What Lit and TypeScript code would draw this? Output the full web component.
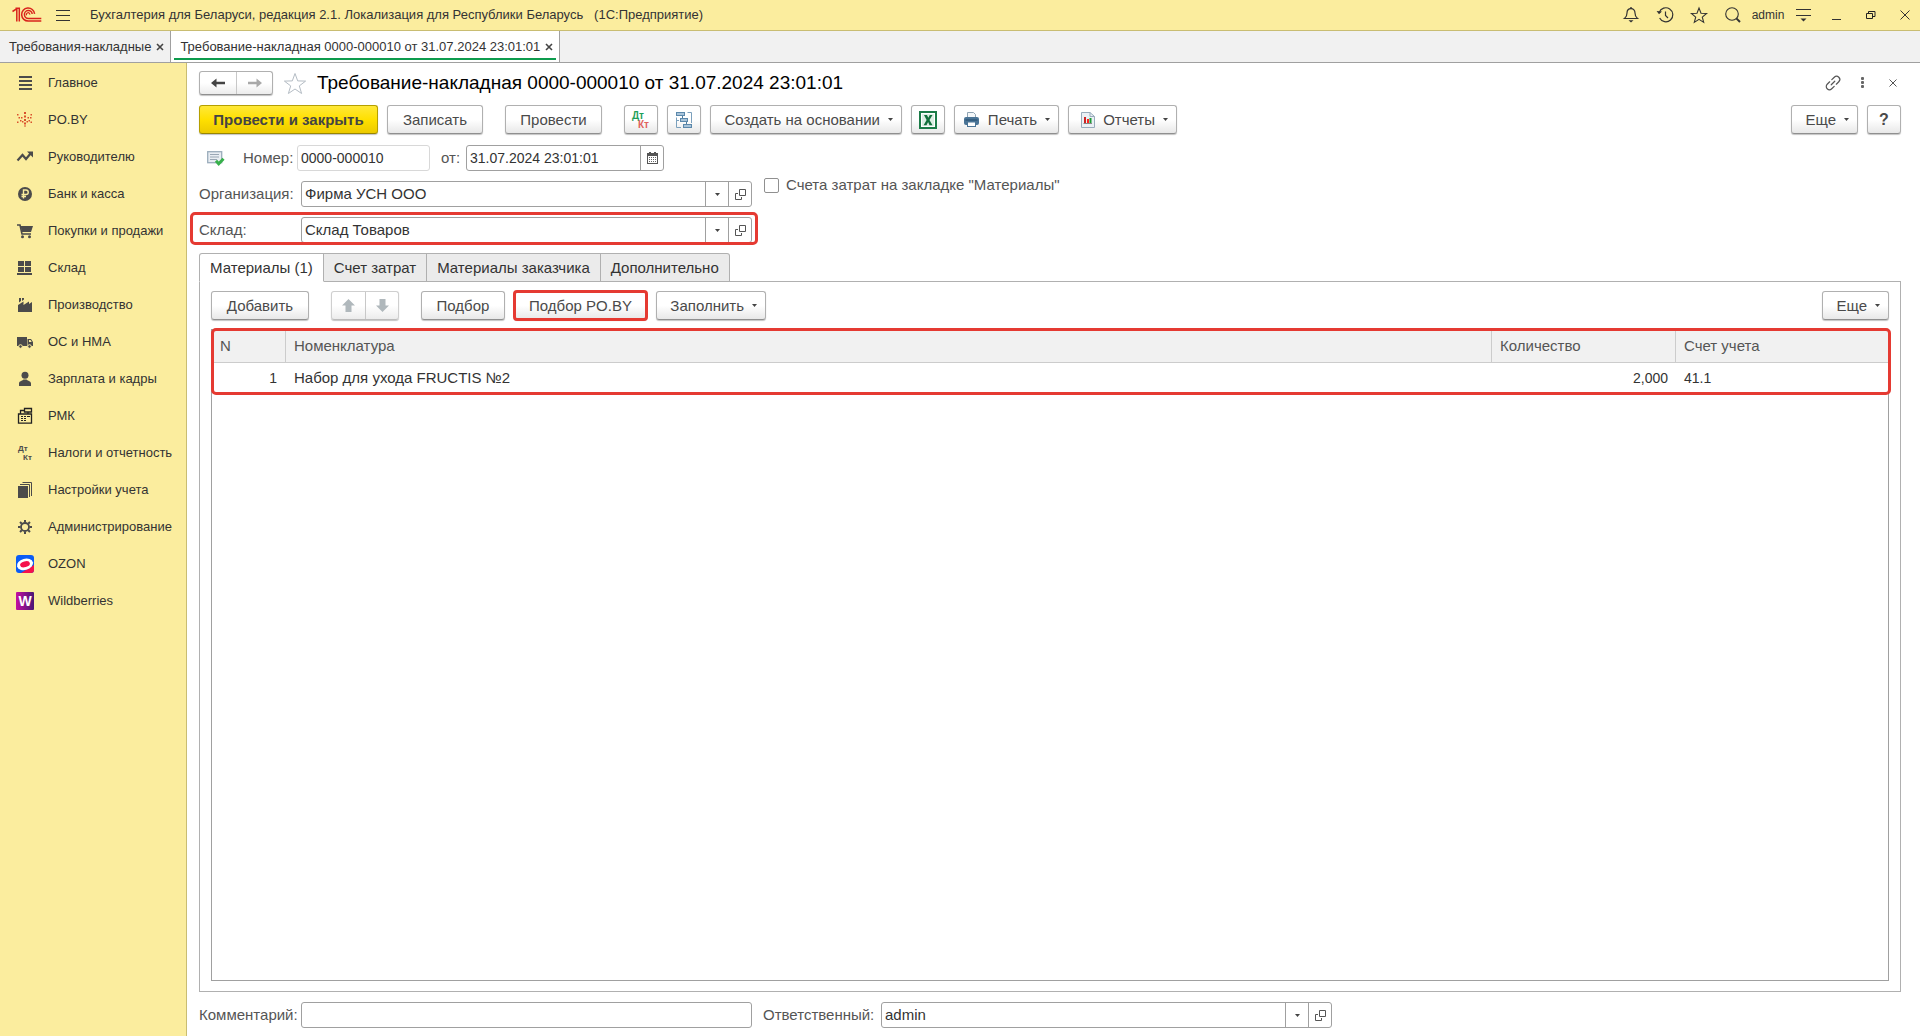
import { LitElement, html, css, svg, nothing } from "lit";
import { customElement, property } from "lit/decorators.js";

const icon = (w: number, h: number, body: unknown) =>
  html`<svg width=${w} height=${h} viewBox="0 0 ${w} ${h}" aria-hidden="true">${body}</svg>`;

const DARK = "#4b4b4b";

const icons = {
  logo: icon(30, 16, svg`<g fill="none" stroke="#d9231c" stroke-width="1.5">
    <path d="M.5 4.500L3.500 2.600H4.800V14.500"/><path d="M3.500 1.200H7.300V14.500"/>
    <path d="M22.600 6.800A6.500 6.500 0 1 0 16.400 14H29.300"/><path d="M20.200 7A3.900 3.900 0 1 0 16.400 11.400H29.300"/></g>
    <path d="M14.600 8.200a1.700 1.700 0 1 1 3.200-.6" fill="none" stroke="#d9231c" stroke-width="1.200"/>`),
  burger: icon(14, 12, svg`<path d="M0 1.500h14M0 6.500h14M0 11.500h14" stroke="#333" stroke-width="1"/>`),
  bell: icon(16, 16, svg`<path d="M1.500 11.500h13c-2-1.500-2.500-3-2.500-5.500C12 3.300 10.500 1.700 8 1.700S4 3.300 4 6c0 2.500-.5 4-2.500 5.500z" fill="none" stroke="#333" stroke-width="1.200"/><path d="M8 0v2" stroke="#333" stroke-width="1.400"/><path d="M5.500 13.200h5L8 15.600z" fill="#333"/>`),
  history: icon(18, 16, svg`<path d="M3.200 5.500A7 7 0 1 1 3.600 11" fill="none" stroke="#333" stroke-width="1.200"/><path d="M.6 4l2.400 3.200L6 4.400z" fill="#333"/><path d="M9.500 4.500V8.500l2.500 2.500" fill="none" stroke="#333" stroke-width="1.200"/>`),
  star: icon(18, 16, svg`<path d="M9 1l2 5.200 5.600.3-4.300 3.600 1.400 5.300L9 12.400l-4.700 3 1.400-5.300L1.400 6.500 7 6.200z" fill="none" stroke="#333" stroke-width="1.100"/>`),
  search: icon(16, 16, svg`<circle cx="7" cy="7" r="6.300" fill="none" stroke="#333" stroke-width="1.100"/><path d="M11.400 11.400l3.600 3.600" stroke="#333" stroke-width="2"/>`),
  settings: icon(15, 14, svg`<path d="M0 1.500h15M0 7.500h15" stroke="#333" stroke-width="1"/><path d="M4.500 10.500h6l-3 3z" fill="#333"/>`),
  minimize: icon(10, 10, svg`<path d="M0 9.500h9" stroke="#333" stroke-width="1"/>`),
  restore: icon(10, 10, svg`<path d="M.5 3.500h6v5h-6zM2.500 3V1.500h6.500v5H7" fill="none" stroke="#222" stroke-width="1"/>`),
  close: icon(10, 10, svg`<path d="M.5.5l9 9M9.500.5l-9 9" stroke="#333" stroke-width="1"/>`),
  tabClose: icon(8, 8, svg`<path d="M1 1l6 6M7 1l-6 6" stroke="#444" stroke-width="1.600"/>`),
  back: icon(14, 10, svg`<path d="M0 5l5.500-4.500v3.300H14v2.400H5.500v3.300z" fill="#444"/>`),
  forward: icon(14, 10, svg`<path d="M14 5L8.500.5v3.300H0v2.400h8.500v3.300z" fill="#a9a9a9"/>`),
  favorite: icon(24, 23, svg`<path d="M12 1.500l2.700 7.400 7.900.2-6.300 4.800 2.300 7.600-6.600-4.500-6.600 4.500 2.300-7.600L1.400 9.100l7.900-.2z" fill="#fff" stroke="#b4bcc4" stroke-width="1"/>`),
  link: icon(16, 16, svg`<g fill="none" stroke="#555" stroke-width="1.200" stroke-linecap="round" transform="rotate(-45 8 8)"><path d="M6.500 4.800H3a3.200 3.200 0 0 0 0 6.400h3.500M9.500 4.800H13a3.200 3.200 0 0 1 0 6.400H9.500M5.500 8h5" stroke-dasharray="none"/></g>`),
  dots: icon(4, 12, svg`<g fill="#666"><rect x="0" y="0" width="3" height="3" rx="1"/><rect x="0" y="4" width="3" height="3" rx="1"/><rect x="0" y="8" width="3" height="3" rx="1"/></g>`),
  closeSmall: icon(8, 8, svg`<path d="M.5.5l7 7M7.500.5l-7 7" stroke="#555" stroke-width="1"/>`),
  structure: icon(18, 18, svg`<path d="M1.500 6.500V16.500H6M1.500 9.500H4M12.500 1.500H16.500V12M13 8.500h-1" fill="none" stroke="#7ba0bd" stroke-width="1"/><path d="M7.500 5v2.500M11.500 10.500V13" stroke="#4f7c9f"/><g fill="#a9c4da" stroke="#5b88ab" stroke-width="1"><rect x="1.500" y="1.500" width="8" height="3"/><rect x="5.500" y="7.500" width="7" height="3"/><rect x="8.500" y="13.500" width="8" height="3"/></g>`),
  excel: icon(18, 18, svg`<rect x="1" y="1" width="16" height="16" fill="#fff" stroke="#1c7c48" stroke-width="2"/><rect x="3" y="3" width="12" height="12" fill="#dceee3"/><path d="M5 4h3l1.300 2.800L10.800 4h2.700l-3 5 3 5.200h-3L9.100 11l-1.600 3.200H4.600l3-5.200z" fill="#12703c"/>`),
  printer: icon(17, 17, svg`<path d="M4.500 1.500h6l2 2V7h-8z" fill="#f4f7f9" stroke="#8fa3b3" stroke-width="1"/><rect x="1" y="6" width="15" height="8" rx="2" fill="#4a7496"/><path d="M2.500 9h12" stroke="#31587a" stroke-width="1.500"/><rect x="4.500" y="11" width="8" height="4.500" fill="#fff" stroke="#4a7496"/>`),
  report: icon(14, 16, svg`<path d="M.5.500h8.500l4.500 4v11H.5z" fill="#eaf0f5" stroke="#98abbb" stroke-width="1"/><path d="M9 .5v4h4.500" fill="none" stroke="#98abbb"/><path d="M3 5h2v6H3z" fill="#c22"/><path d="M6 7h2v4H6z" fill="#f22"/><path d="M8.500 6h2v5h-2z" fill="#1d9a34"/><path d="M2.500 11.500h8.500" stroke="#888"/>`),
  posted: icon(18, 15, svg`<rect x=".7" y=".7" width="14" height="11" fill="#e8edf2" stroke="#9badbc" stroke-width="1.300"/><path d="M3 3.500h9M3 6h9M3 8.500h7" stroke="#9aa7b4" stroke-width="1"/><path d="M9 9.700l2.700 3 4.800-5" fill="none" stroke="#37b04b" stroke-width="3"/>`),
  calendar: icon(11, 12, svg`<path d="M0 1h11v11H0z" fill="#555"/><path d="M3 0v2M8 0v2" stroke="#555" stroke-width="2"/><path d="M1 4h9v7H1z" fill="#fff"/><path d="M2 5.500h7M2 7.500h7M2 9.500h7" stroke="#666" stroke-width="1" stroke-dasharray="1 1"/>`),
  open: icon(11, 11, svg`<path d="M3 4.500H.5v6h6V8M4.500.5h6v6h-6z" fill="none" stroke="#555" stroke-width="1"/>`),
  up: icon(13, 13, svg`<path d="M6.500 0L13 6.500H9.500V13h-6V6.500H0z" fill="#b0b8bc"/>`),
  down: icon(13, 13, svg`<path d="M6.500 13L13 6.500H9.500V0h-6v6.500H0z" fill="#b0b8bc"/>`),
  caret: icon(5, 3, svg`<path d="M0 0h5L2.500 3z" fill="#444"/>`),
};

const nav: [string, unknown][] = [
  ["Главное", svg`<path d="M3 3h13M3 7h13M3 11h13M3 15h13" stroke="${DARK}" stroke-width="2"/>`],
  ["PO.BY", svg`<g fill="#d9512c"><path d="M8 1h2v2H8zM8 4.500h2v2H8zM8 8h2v2H8zM8 11.500h2v2H8zM8 14.500h2v1H8zM5 6h1.500v1.500H5zM11.500 6H13v1.500h-1.500zM4 9h1.500v1.500H4zM12.500 9H14v1.500h-1.500zM6 10h1.500v1.500H6zM10.500 10H12v1.500h-1.500zM1 3h1.500v1.500H1zM14.500 3H16v1.500h-1.500zM2.500 6H4v1.500H2.500zM14 6h1.500v1.500H14zM1 10.500h1.500V12H1zM14.500 10.500H16V12h-1.500z"/></g>`],
  ["Руководителю", svg`<path d="M1.500 12.500L6.500 7l3.500 4 5-6" fill="none" stroke="${DARK}" stroke-width="2.200"/><path d="M11 3.500h6v6z" fill="${DARK}"/>`],
  ["Банк и касса", svg`<circle cx="9" cy="9" r="7" fill="${DARK}"/><path d="M7.500 13.500V5h2.500a2 2 0 0 1 0 4.500H5.500M5.500 11.500H10" fill="none" stroke="#fbed9e" stroke-width="1.400"/>`],
  ["Покупки и продажи", svg`<path d="M1 3h3l2 9h9" fill="none" stroke="${DARK}" stroke-width="1.600"/><path d="M4.500 4h12.500l-2 6H6z" fill="${DARK}"/><circle cx="6.500" cy="14.700" r="1.500" fill="${DARK}"/><circle cx="13.500" cy="14.700" r="1.500" fill="${DARK}"/>`],
  ["Склад", svg`<path d="M2 2h6v5H2zM9 2h6v5H9zM2 8h6v5H2zM9 8h6v5H9zM1 14h15v2H1z" fill="${DARK}"/>`],
  ["Производство", svg`<path d="M2 16V9l5.500-3.500V9L13 5.500V8l3-2v10zM3 2h2v3L3 6.500zM6 2h2v1.500L6 5z" fill="${DARK}"/>`],
  ["ОС и НМА", svg`<path d="M1 4h10v9H1zM11.500 6H15l2 3v4h-5.500z" fill="${DARK}"/><path d="M13 7h1.500l1.200 2H13z" fill="#fbed9e"/><circle cx="4.500" cy="13.500" r="1.800" fill="${DARK}" stroke="#fbed9e"/><circle cx="13.500" cy="13.500" r="1.800" fill="${DARK}" stroke="#fbed9e"/>`],
  ["Зарплата и кадры", svg`<circle cx="9" cy="5.300" r="3.500" fill="${DARK}"/><path d="M3 16v-2.500C3 11 6 11 7.500 9.500h3C12 11 15 11 15 13.500V16z" fill="${DARK}"/>`],
  ["РМК", svg`<path d="M2.500 7V16.200h13V7zM4.500 7V3.500h4M8.500 1.500h7v3.500h-7zM12 5v2" fill="none" stroke="#222" stroke-width="1.300"/><path d="M5 9h2v1H5zM8 9h2v1H8zM5 11h2v1H5zM8 11h2v1H8zM5 13h2v1H5zM8 13h2v1H8zM11 9h3v1h-3z" fill="#222"/>`],
  ["Налоги и отчетность", svg`<text x="2" y="7" font-size="8" font-weight="700" fill="${DARK}">Дт</text><text x="7" y="16" font-size="8" font-weight="700" fill="${DARK}">Кт</text>`],
  ["Настройки учета", svg`<path d="M2 5h10v12H2z" fill="${DARK}"/><path d="M4 3.500h9.500V16M6.500 1.500H15.500V15" fill="none" stroke="${DARK}" stroke-width="1"/>`],
  ["Администрирование", svg`<circle cx="9" cy="9" r="4" fill="none" stroke="${DARK}" stroke-width="1.800"/><path d="M9 2v2.500M9 13.500V16M2 9h2.500M13.500 9H16M4 4l1.800 1.800M12.200 12.200L14 14M4 14l1.800-1.800M12.200 5.800L14 4" stroke="${DARK}" stroke-width="2"/>`],
  ["OZON", svg`<rect width="18" height="18" rx="3" fill="#0a5cf5"/><path d="M5 18L18 10v5a3 3 0 0 1-3 3z" fill="#f5114c"/><ellipse cx="9" cy="9.300" rx="8.200" ry="5.600" transform="rotate(-15 9 9.300)" fill="#fff"/><ellipse cx="9" cy="9.300" rx="5" ry="2.900" transform="rotate(-15 9 9.300)" fill="#f5114c"/>`],
  ["Wildberries", svg`<defs><linearGradient id="wb"><stop offset="0" stop-color="#c40fa0"/><stop offset="1" stop-color="#4a1575"/></linearGradient></defs><rect width="18" height="18" rx="1" fill="url(#wb)"/><text x="9" y="14" font-size="14" font-weight="700" text-anchor="middle" fill="#fff">W</text>`],
];

const base = css`
  * { box-sizing: border-box; }
  svg { display: block; flex: none; overflow: visible; }
  button, input { font: inherit; color: inherit; margin: 0; }
`;

/** Push button with an optional icon and drop-down caret. */
@customElement("ui-button")
export class UiButton extends LitElement {
  @property() label = "";
  @property() hint = "";
  @property({ attribute: false }) glyph: unknown = nothing;
  @property({ type: Boolean }) menu = false;
  @property({ type: Boolean, reflect: true }) primary = false;
  @property({ type: Boolean, reflect: true }) strong = false;
  @property({ type: Boolean, reflect: true }) marked = false;

  static styles = [base, css`
    :host { display: inline-flex; position: relative; height: 29px; }
    .btn {
      display: flex; align-items: center; justify-content: center; gap: 8px;
      width: 100%; padding: 0 6px; white-space: nowrap; color: #4a4a4a;
      border: 1px solid #b0b0b0; border-bottom-color: #8f8f8f; border-radius: 3px;
      background: linear-gradient(#fff 50%, #e8e8e8); box-shadow: 0 1px 1px #c4c4c4;
    }
    .menu { justify-content: flex-end; padding-right: 8px; }
    :host([strong]) .btn { font-weight: 700; font-size: 16px; }
    :host([primary]) .btn {
      font-weight: 700; color: #444; border-color: #b59f00; border-bottom-color: #998600;
      background: linear-gradient(#ffe838, #ffe000 50%, #ecca00);
    }
    :host([marked])::after {
      content: ""; position: absolute; inset: -1px; border: 3px solid #e53a32; border-radius: 4px;
      pointer-events: none;
    }
  `];

  render() {
    return html`<button class="btn ${this.menu ? "menu" : ""}" type="button" aria-label=${this.hint || this.label}>
      ${this.glyph}${this.label ? html`<span>${this.label}</span>` : nothing}${this.menu ? icons.caret : nothing}
    </button>`;
  }
}

/** Labelled text field with optional buttons at its right end. */
@customElement("ui-field")
export class UiField extends LitElement {
  @property() label = "";
  @property() value = "";
  @property({ type: Boolean }) readonly = false;
  @property({ type: Boolean }) numeric = false;
  @property({ type: Boolean, reflect: true }) marked = false;
  @property({ attribute: false }) actions: [string, unknown][] = [];

  static styles = [base, css`
    :host { display: flex; align-items: center; height: 26px; position: relative; color: #333; }
    label { flex: none; width: var(--label-width, auto); color: #555; white-space: nowrap; }
    .box {
      display: flex; flex: 1; min-width: 0; height: 26px; background: #fff;
      border: 1px solid #a0a0a0; border-radius: 3px;
    }
    .quiet { border-color: #d8d8d8; }
    .numeric { font-size: 14px; }
    input { flex: 1; min-width: 0; border: 0; padding: 0 3px; background: none; outline: 0; }
    button {
      width: 23px; padding: 0; border: 0; border-left: 1px solid #a0a0a0; background: none;
      display: flex; align-items: center; justify-content: center;
    }
    :host([marked])::after {
      content: ""; position: absolute; inset: -5px -6px -2px -9px; border: 3px solid #e53a32;
      border-radius: 5px; pointer-events: none;
    }
  `];

  render() {
    return html`<label for="f">${this.label}</label>
      <div class="box ${this.readonly ? "quiet" : ""} ${this.numeric ? "numeric" : ""}">
        <input id="f" type="text" .value=${this.value} ?readonly=${this.readonly} />
        ${this.actions.map(([name, glyph]) => html`<button type="button" aria-label=${name}>${glyph}</button>`)}
      </div>`;
  }
}

@customElement("app-root")
export class AppRoot extends LitElement {
  static styles = [base, css`
    :host {
      display: flex; flex-direction: column; min-height: 100vh; background: #fff;
      font: 15px/18px "Liberation Sans", Arial, sans-serif; color: #333;
    }
    a { color: inherit; text-decoration: none; }
    .plain { display: flex; align-items: center; justify-content: center; border: 0; padding: 0; background: none; }
    .top {
      display: flex; align-items: center; height: 31px; padding: 0 10px 0 12px;
      background: #fbed9e; border-bottom: 1px solid #c9bd72; font-size: 13px;
    }
    .top .menu { margin: 0 20px 0 14px; }
    .appname { flex: 1; white-space: pre; }
    .tools { display: flex; align-items: center; }
    .tools .plain { width: 34px; height: 30px; }
    .tools .user { font-size: 12px; width: 36px; }
    .tools .last { width: 22px; justify-content: flex-end; }
    .tabs { display: flex; height: 32px; background: #f1f1f1; border-bottom: 1px solid #a0a0a0; font-size: 13px; }
    .tab { display: flex; align-items: center; gap: 5px; padding: 0 6px 0 9px; border-right: 1px solid #a0a0a0; position: relative; }
    .tab.on { background: #fff; }
    .tab.on::after { content: ""; position: absolute; left: 3px; right: 3px; bottom: 2px; height: 2px; background: #0d9b4d; }
    .body { display: flex; flex: 1; }
    .side { flex: none; width: 187px; padding-top: 1px; background: #fbed9e; border-right: 1px solid #c9bd72; font-size: 13px; }
    .side a { display: flex; align-items: center; gap: 14px; height: 37px; padding-left: 16px; white-space: nowrap; }
    .side svg { font-family: "Liberation Sans", Arial, sans-serif; }
    .main { flex: 1; min-width: 0; display: flex; flex-direction: column; gap: 10px; padding: 8px 19px 8px 12px; }
    .head { display: flex; align-items: center; height: 24px; }
    .pair { display: flex; border: 1px solid #b0b0b0; border-bottom-color: #8f8f8f; border-radius: 3px; background: linear-gradient(#fff 50%, #ececec); box-shadow: 0 1px 1px #c4c4c4; }
    .pair .plain { width: 36px; height: 22px; }
    .pair .plain + .plain { border-left: 1px solid #c8c8c8; }
    .star { margin: 0 10px; }
    h1 { flex: 1; margin: 0; font-size: 19px; font-weight: 400; line-height: 24px; color: #000; }
    .head .act { width: 30px; height: 24px; }
    .head .end { margin-right: -7px; }
    .bar { display: flex; gap: 9px; }
    .grow { flex: 1; }
    .gap { width: 4px; }
    .sq { width: 34px; }
    .form { display: grid; grid-template-columns: minmax(0, 553px) 1fr; gap: 10px 12px; padding-top: 1px; }
    .number { display: flex; align-items: center; grid-column: 1 / -1; }
    .number svg { margin: 0 18px 0 8px; }
    .stack { display: flex; flex-direction: column; gap: 10px; --label-width: 102px; }
    .num { width: 187px; --label-width: 54px; }
    .date { width: 223px; margin-left: 11px; --label-width: 25px; }
    .check { display: flex; gap: 7px; align-self: start; align-items: center; margin-top: -5px; height: 18px; color: #555; }
    .check input { appearance: none; width: 15px; height: 15px; border: 1px solid #909090; border-radius: 2px; background: #fff; }
    .sheet { flex: 1; display: flex; flex-direction: column; }
    .pages { display: flex; margin-bottom: -1px; position: relative; }
    .pages button { height: 29px; padding: 0 10px; border: 1px solid #b0b0b0; border-left-width: 0; background: #ebebeb; color: #333; }
    .pages button:first-child { border-left-width: 1px; border-radius: 3px 0 0 0; background: #fff; border-bottom-color: #fff; }
    .pages button:last-child { border-radius: 0 3px 0 0; }
    .panel { flex: 1; display: flex; flex-direction: column; gap: 9px; border: 1px solid #b0b0b0; padding: 9px 11px 10px; }
    .arrows { margin: 0 13px; border-color: #cfcfcf; border-bottom-color: #bbb; }
    .arrows .plain { width: 33px; height: 27px; }
    .grid { flex: 1; border: 1px solid #a0a0a0; position: relative; }
    .rows { position: relative; }
    .rows::after { content: ""; position: absolute; inset: -2px -3px -2px -1px; border: 3px solid #e53a32; border-radius: 5px; pointer-events: none; }
    table { width: 100%; border-collapse: separate; border-spacing: 0; table-layout: fixed; }
    th, td { height: 30px; padding: 0 8px; text-align: left; font-weight: 400; }
    th { height: 33px; color: #555; background: #f1f1f1; border-right: 1px solid #ccc; border-bottom: 1px solid #ccc; }
    th:last-child { border-right: 0; }
    .d { font-size: 14px; }
    .r { text-align: right; }
    td.first { padding-right: 9px; }
    .n { width: 74px; }
    .q { width: 184px; }
    .a { width: 212px; }
    .foot { display: grid; grid-template-columns: minmax(0, 553px) minmax(0, 569px); gap: 11px; --label-width: 102px; }
    .foot .resp { --label-width: 118px; }
  `];

  private plain(name: string, glyph: unknown, cls = "") {
    return html`<button type="button" class="plain ${cls}" aria-label=${name}>${glyph}</button>`;
  }

  render() {
    const ref: [string, unknown][] = [["Выбрать", icons.caret], ["Открыть", icons.open]];
    const entries = html`<svg width="18" height="18" viewBox="0 0 18 18" aria-hidden="true" font-family="Liberation Sans, Arial, sans-serif" font-size="10" font-weight="700"><text x="0" y="8" fill="#1fa05a">Дт</text><text x="6" y="17" fill="#e0625e">Кт</text></svg>`;
    return html`
      <header class="top">
        ${icons.logo}
        ${this.plain("Главное меню", icons.burger, "menu")}
        <span class="appname">Бухгалтерия для Беларуси, редакция 2.1. Локализация для Республики Беларусь   (1С:Предприятие)</span>
        <div class="tools">
          ${this.plain("Оповещения", icons.bell)}${this.plain("История", icons.history)}
          ${this.plain("Избранное", icons.star)}${this.plain("Поиск", icons.search)}
          ${this.plain("Пользователь", "admin", "user")}${this.plain("Сервис", icons.settings)}
          ${this.plain("Свернуть", icons.minimize)}${this.plain("Восстановить", icons.restore)}
          ${this.plain("Закрыть", icons.close, "last")}
        </div>
      </header>
      <div class="tabs">
        <div class="tab"><a href="#list">Требования-накладные</a>${this.plain("Закрыть вкладку", icons.tabClose)}</div>
        <div class="tab on"><a href="#doc">Требование-накладная 0000-000010 от 31.07.2024 23:01:01</a>${this.plain("Закрыть вкладку", icons.tabClose)}</div>
      </div>
      <div class="body">
        <nav class="side">
          ${nav.map(([text, glyph]) => html`<a href="#${text}">${icon(18, 18, glyph)}<span>${text}</span></a>`)}
        </nav>
        <main class="main">
          <div class="head">
            <div class="pair">${this.plain("Назад", icons.back)}${this.plain("Вперед", icons.forward)}</div>
            ${this.plain("В избранное", icons.favorite, "star")}
            <h1>Требование-накладная 0000-000010 от 31.07.2024 23:01:01</h1>
            ${this.plain("Ссылка", icons.link, "act")}${this.plain("Действия", icons.dots, "act")}${this.plain("Закрыть форму", icons.closeSmall, "act end")}
          </div>
          <div class="bar">
            <ui-button primary label="Провести и закрыть" style="width:179px"></ui-button>
            <ui-button label="Записать" style="width:96px"></ui-button>
            <span class="gap"></span>
            <ui-button label="Провести" style="width:97px"></ui-button>
            <span class="gap"></span>
            <ui-button class="sq" hint="Проводки" .glyph=${entries}></ui-button>
            <ui-button class="sq" hint="Структура подчиненности" .glyph=${icons.structure}></ui-button>
            <ui-button menu label="Создать на основании" style="width:192px"></ui-button>
            <ui-button class="sq" hint="Excel" .glyph=${icons.excel}></ui-button>
            <ui-button menu label="Печать" .glyph=${icons.printer} style="width:105px"></ui-button>
            <ui-button menu label="Отчеты" .glyph=${icons.report} style="width:109px"></ui-button>
            <span class="grow"></span>
            <ui-button menu label="Еще" style="width:67px"></ui-button>
            <ui-button class="sq" strong label="?"></ui-button>
          </div>
          <div class="form">
            <div class="number">
              ${icons.posted}
              <ui-field class="num" numeric label="Номер:" value="0000-000010" readonly></ui-field>
              <ui-field class="date" numeric label="от:" value="31.07.2024 23:01:01" .actions=${[["Календарь", icons.calendar]]}></ui-field>
            </div>
            <div class="stack">
              <ui-field label="Организация:" value="Фирма УСН ООО" .actions=${ref}></ui-field>
              <ui-field marked label="Склад:" value="Склад Товаров" .actions=${ref}></ui-field>
            </div>
            <label class="check"><input type="checkbox" />Счета затрат на закладке "Материалы"</label>
          </div>
          <section class="sheet">
            <div class="pages" role="tablist">
              ${["Материалы (1)", "Счет затрат", "Материалы заказчика", "Дополнительно"].map(
                (t, i) => html`<button type="button" role="tab" aria-selected=${i === 0 ? "true" : "false"}>${t}</button>`)}
            </div>
            <div class="panel">
              <div class="bar">
                <ui-button label="Добавить" style="width:98px"></ui-button>
                <div class="pair arrows">${this.plain("Вверх", icons.up)}${this.plain("Вниз", icons.down)}</div>
                <ui-button label="Подбор" style="width:84px"></ui-button>
                <ui-button marked label="Подбор PO.BY" style="width:133px"></ui-button>
                <ui-button menu label="Заполнить" style="width:110px"></ui-button>
                <span class="grow"></span>
                <ui-button menu label="Еще" style="width:67px"></ui-button>
              </div>
              <div class="grid">
                <div class="rows">
                  <table>
                    <thead><tr><th class="n">N</th><th>Номенклатура</th><th class="q">Количество</th><th class="a">Счет учета</th></tr></thead>
                    <tbody><tr><td class="r d first">1</td><td>Набор для ухода FRUCTIS №2</td><td class="r d">2,000</td><td class="d">41.1</td></tr></tbody>
                  </table>
                </div>
              </div>
            </div>
          </section>
          <div class="foot">
            <ui-field label="Комментарий:"></ui-field>
            <ui-field class="resp" label="Ответственный:" value="admin" .actions=${ref}></ui-field>
          </div>
        </main>
      </div>`;
  }
}
